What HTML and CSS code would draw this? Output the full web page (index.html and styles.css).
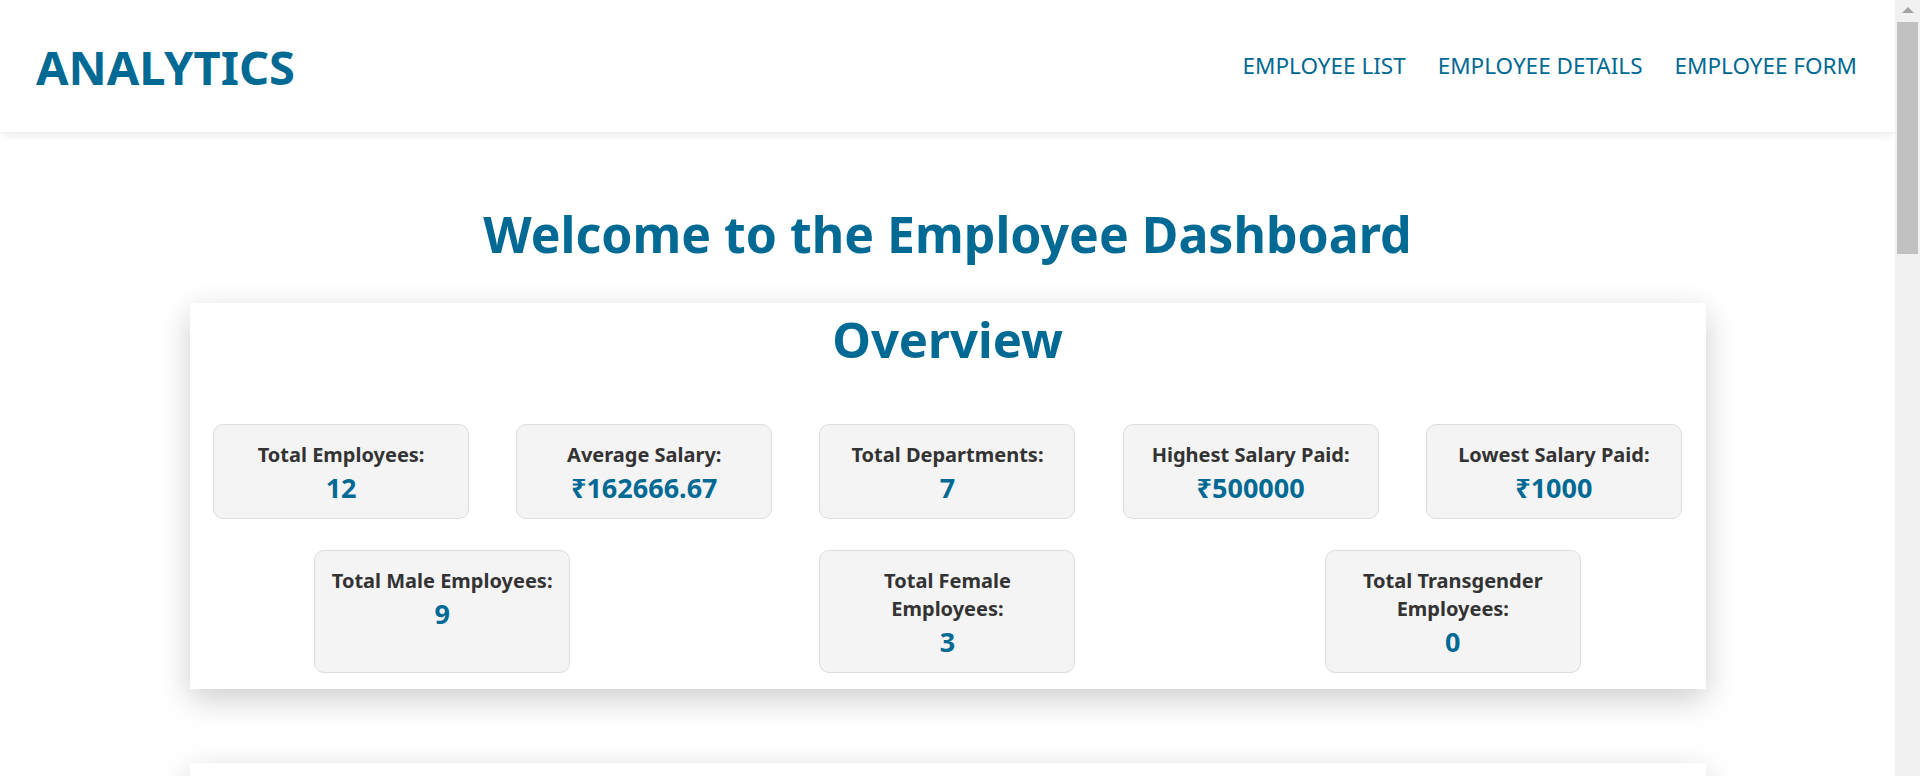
FILE: index.html
```
<!DOCTYPE html>
<html lang="en">
<head>
<meta charset="utf-8">
<title>Employee Dashboard</title>
<link rel="stylesheet" href="styles.css">
</head>
<body>
<div class="viewport">
  <div class="page">
    <header class="topbar">
      <div class="logo">ANALYTICS</div>
      <nav class="nav">
        <a href="#" class="nav-link">EMPLOYEE LIST</a>
        <a href="#" class="nav-link">EMPLOYEE DETAILS</a>
        <a href="#" class="nav-link">EMPLOYEE FORM</a>
      </nav>
    </header>
    <main class="content">
      <h1 class="welcome">Welcome to the Employee Dashboard</h1>
      <section class="card">
        <h2 class="card-title">Overview</h2>
        <div class="stat-row first">
          <div class="stat"><div class="stat-label">Total Employees:</div><div class="stat-value">12</div></div>
          <div class="stat"><div class="stat-label">Average Salary:</div><div class="stat-value">₹162666.67</div></div>
          <div class="stat"><div class="stat-label">Total Departments:</div><div class="stat-value">7</div></div>
          <div class="stat"><div class="stat-label">Highest Salary Paid:</div><div class="stat-value">₹500000</div></div>
          <div class="stat"><div class="stat-label">Lowest Salary Paid:</div><div class="stat-value">₹1000</div></div>
        </div>
        <div class="stat-row second">
          <div class="stat"><div class="stat-label">Total Male Employees:</div><div class="stat-value">9</div></div>
          <div class="stat"><div class="stat-label">Total Female Employees:</div><div class="stat-value">3</div></div>
          <div class="stat"><div class="stat-label">Total Transgender Employees:</div><div class="stat-value">0</div></div>
        </div>
      </section>
      <section class="card next-card"></section>
    </main>
  </div>
  <div class="scrollbar">
    <div class="scroll-arrow"></div>
    <div class="scroll-thumb"></div>
  </div>
</div>
</body>
</html>
```
FILE: styles.css
```
html, body {
  margin: 0;
  height: 100%;
  overflow: hidden;
  background: #ffffff;
}

body {
  font-family: "Noto Sans", "Open Sans", sans-serif;
  color: #333333;
}

.viewport {
  display: flex;
  height: 100vh;
}

.page {
  flex: 1;
  min-width: 0;
  overflow: hidden;
}

.topbar {
  height: 132px;
  display: flex;
  align-items: center;
  justify-content: space-between;
  padding: 0 38px 0 36px;
  background: #ffffff;
  box-shadow: 0 2px 10px rgba(0, 0, 0, 0.1);
}

.logo {
  font-size: 47px;
  font-weight: 700;
  color: #006994;
  line-height: 1;
  margin-top: 2px;
}

.nav {
  display: flex;
  gap: 32px;
}

.nav-link {
  font-size: 22.5px;
  color: #006994;
  text-decoration: none;
  line-height: 1;
}

.content {
  padding-top: 66px;
}

.welcome {
  margin: 0 0 33px;
  text-align: center;
  font-size: 50px;
  line-height: 72px;
  font-weight: 700;
  color: #006994;
}

.card {
  width: 80%;
  margin: 0 auto;
  background: #ffffff;
  box-shadow: 0 10px 30px rgba(0, 0, 0, 0.2);
  padding: 0 0 16px;
}

.card-title {
  margin: 0;
  text-align: center;
  font-size: 49px;
  line-height: 72px;
  font-weight: 700;
  color: #006994;
}

.stat-row {
  display: flex;
  justify-content: space-around;
}

.stat-row.first {
  margin-top: 49px;
}

.stat-row.second {
  margin-top: 31px;
}

.stat {
  box-sizing: border-box;
  width: 256px;
  padding: 16px 12px 14px;
  background: #f4f4f4;
  border: 1px solid #dddddd;
  border-radius: 10px;
  text-align: center;
}

.stat-label {
  font-size: 20px;
  line-height: 28px;
  font-weight: 700;
  color: #333333;
}

.stat-value {
  margin-top: 3px;
  font-size: 27px;
  line-height: 32px;
  font-weight: 700;
  color: #006994;
}

.next-card {
  margin-top: 74px;
  height: 400px;
  padding: 0;
}

.scrollbar {
  width: 25px;
  flex: none;
  background: #f1f1f1;
  display: flex;
  flex-direction: column;
  align-items: center;
}

.scroll-arrow {
  margin-top: 7px;
  width: 0;
  height: 0;
  border-left: 6px solid transparent;
  border-right: 6px solid transparent;
  border-bottom: 6px solid #a3a3a3;
}

.scroll-thumb {
  margin-top: 9px;
  width: 21px;
  height: 232px;
  background: #c1c1c1;
}
```
